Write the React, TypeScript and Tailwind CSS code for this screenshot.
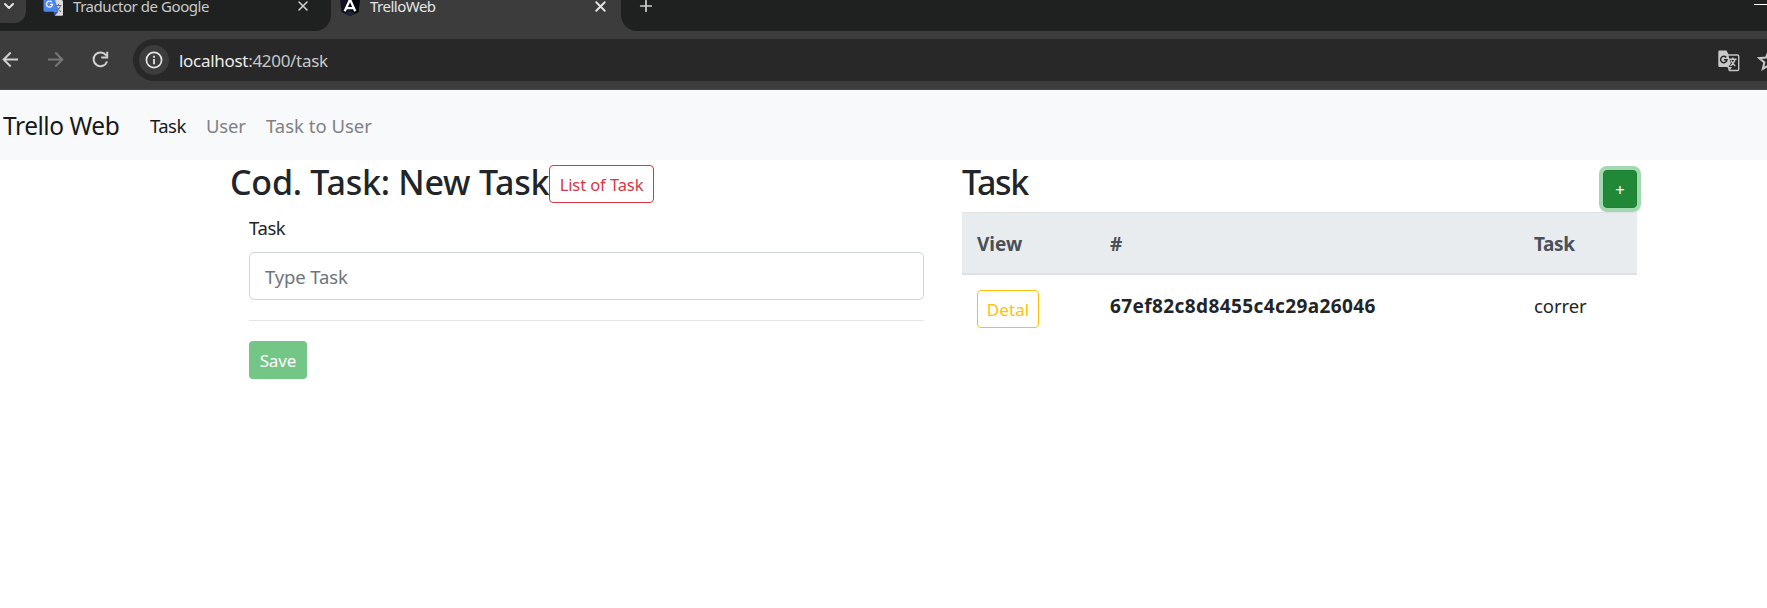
import { X, Plus, ChevronDown } from "lucide-react";

function TranslateLogo() {
  return (
    <svg className="absolute left-[43px] top-[-5px]" width="21" height="21" viewBox="0 0 21 21">
      <path d="M9 5h9.500a1.500 1.500 0 0 1 1.500 1.500V19.500a1.200 1.200 0 0 1-1.200 1.200H12z" fill="#dcdcdc" />
      <path d="M10 16.500h5.500L12 20.700z" fill="#2f56c6" />
      <path d="M2 1h9l4.500 15.700H2A1.500 1.500 0 0 1 .5 15.200V2.500A1.500 1.500 0 0 1 2 1z" fill="#4c87ee" />
      <path d="M8.900 7.300a3 3 0 1 0 .6 2.100H6.900" fill="none" stroke="#e8f0ff" strokeWidth="1.400" />
      <path d="M12.500 10.500h6M15.500 9v1.500M17.500 10.500c-.6 2.600-2.200 4.400-4 5.500M13.800 12l4.200 5" fill="none" stroke="#6a6f73" strokeWidth="1.100" />
    </svg>
  );
}

function ShieldLogo() {
  return (
    <svg className="absolute left-[339px] top-[-5px]" width="22" height="21" viewBox="0 0 22 21">
      <path d="M11 0L21 3.500 19.500 17 11 21 2.500 17 1 3.500z" fill="#10131f" />
      <path d="M11 0L21 3.500 19.500 17 11 21z" fill="#03050d" />
      <path d="M11 15.500l5 3-5 2.500-5-2.500z" fill="#1c2533" />
      <path d="M5.700 16.300L11 4.500l5.300 11.800M7.600 13.200h6.800" fill="none" stroke="#fff" strokeWidth="2.300" />
    </svg>
  );
}

function TabStrip() {
  return (
    <div className="relative flex h-[31px] bg-[#3c3c3c] text-[15px]">
      <div className="h-full w-[331px] rounded-br-[16px] bg-[#1f2120]" />
      <div className="h-full w-[290px]" />
      <div className="h-full flex-1 rounded-bl-[16px] bg-[#1f2120]" />

      <div className="absolute left-0 top-0 h-[23px] w-[26px] rounded-br-[12px] bg-[#3c3c3c]" />
      <ChevronDown className="absolute left-[1px] top-[-2px] text-[#e6e6e6]" size={16} strokeWidth={3} />
      <TranslateLogo />
      <span className="absolute left-[73px] top-0 whitespace-nowrap leading-[13px] tracking-[-0.44px] text-[#c9cac9]">Traductor de Google</span>
      <X className="absolute left-[295px] top-[-2px] text-[#d0d0d0]" size={16} strokeWidth={2.3} />
      <ShieldLogo />
      <span className="absolute left-[370px] top-0 whitespace-nowrap leading-[13px] tracking-[-0.5px] text-[#e6e6e6]">TrelloWeb</span>
      <X className="absolute left-[592px] top-[-2px] text-[#e6e6e6]" size={17} strokeWidth={2.600} />
      <Plus className="absolute left-[637px] top-[-3px] text-[#d0d0d0]" size={18} strokeWidth={2.300} />
      <div className="absolute left-[1754px] top-[4px] h-px w-[13px] bg-white" />
    </div>
  );
}

function Toolbar() {
  return (
    <div className="flex h-[59px] items-start overflow-hidden border-b border-[#4b4647] bg-[#3c3c3c] pt-2">
      <div className="flex h-[42px] w-[133px] shrink-0 items-center">
        <svg width="133" height="42" viewBox="0 0 133 42" fill="none" strokeWidth="2">
          <path d="M18 20.500H4M10.700 13.500l-7 7 7 7" stroke="#d0d0d0" />
          <path d="M48 20.500h14M55.300 13.500l7 7-7 7" stroke="#777" />
          <path d="M106.200 16.500A6.900 6.900 0 1 0 107 22.500M107.200 12.800v5.700h-6" stroke="#d0d0d0" />
        </svg>
      </div>
      <div className="flex h-[42px] w-[1700px] shrink-0 items-center rounded-l-full bg-[#282828] pl-1.5">
        <div className="flex size-[30px] items-center justify-center rounded-full bg-[#3c3c3c]">
          <svg width="18" height="18" viewBox="0 0 18 18" fill="none">
            <circle cx="9" cy="9" r="7.600" stroke="#e3e3e3" strokeWidth="1.700" />
            <path d="M9 8v5.200M9 4.800v1.900" stroke="#e3e3e3" strokeWidth="1.800" />
          </svg>
        </div>
        <div className="ml-[10px] w-[1539px] whitespace-nowrap pt-px text-[17px] leading-[24px] tracking-[-0.3px] text-[#c8c8c8]">
          <span className="text-[#ececec]">localhost</span>:4200/task
        </div>
        <svg className="mt-px" width="22" height="22" viewBox="0 0 22 22" fill="none">
          <path d="M10 5h9.500a1.200 1.200 0 0 1 1.200 1.200V19.300a1.200 1.200 0 0 1-1.200 1.200H11.500L10 16.500" stroke="#c4c4c4" strokeWidth="1.400" />
          <path d="M1.500.5H8.500L10.800 5l3.200 12-2 3-1.500-3H1.500A1.200 1.200 0 0 1 .3 15.800V1.700A1.200 1.200 0 0 1 1.500.5z" fill="#c8c8c8" />
          <path d="M8.300 7.500a3.200 3.200 0 1 0 .7 2.300H5.900" stroke="#282828" strokeWidth="1.500" />
          <path d="M10.500 5.700L13 13l-2.500 4h9V6H12z" fill="#282828" />
          <path d="M11.500 9.200h7M14.800 7.500v1.700M17 9.400c-.6 2.800-2.300 4.900-4.500 6.400M13 10.500c1 2.300 2.400 4.100 4.300 5.500" stroke="#c8c8c8" strokeWidth="1.400" />
        </svg>
        <svg className="ml-[17px] mt-px" width="23" height="23" viewBox="0 0 20 20" fill="none">
          <path d="M10 2.200l2.200 5.300 5.700.5-4.300 3.700 1.300 5.600L10 14.300l-4.900 3 1.300-5.600L2.100 8l5.700-.5z" stroke="#c8c8c8" strokeWidth="1.800" />
        </svg>
      </div>
    </div>
  );
}

function Navbar() {
  return (
    <nav className="flex h-[70px] items-center whitespace-nowrap bg-[#f8f9fb] text-[18.5px] text-[#808182]">
      <a className="ml-[3px] w-[147px] pt-0.5 text-[24.5px] tracking-[-0.45px] text-[#18191a]">Trello Web</a>
      <a className="w-[56px] pt-0.5 tracking-[-0.55px] text-[#18191a]">Task</a>
      <a className="w-[65px] pt-0.5 tracking-[-0.2px]">User</a>
      <a className="-ml-[5px] pt-0.5 tracking-[0px]">Task to User</a>
    </nav>
  );
}

function TaskForm() {
  return (
    <section className="w-[694px]">
      <div className="flex h-[44px] items-start">
        <h1 className="w-[319px] whitespace-nowrap pt-[1px] text-[34px] font-[550] leading-[43px] tracking-[-0.24px]">Cod. Task: New Task</h1>
        <button className="mt-[5px] flex h-[38px] w-[105px] shrink-0 items-center justify-center rounded-[4px] border border-[#dc3545] pt-0.5 text-[16.5px] tracking-[-0.09px] text-[#dc3545]">List of Task</button>
      </div>
      <form className="ml-[19px] w-[675px] pt-2">
        <label className="block h-[40px] pt-[1px] text-[18.5px] leading-[30px] tracking-[-0.4px]">Task</label>
        <div className="flex h-12 items-center rounded-[5px] border border-[#ced4da] px-[15px] pt-0.5 text-[18.5px] tracking-[-0.13px] text-[#6c757d]">Type Task</div>
        <hr className="mt-[20px] border-[#e5e5e5]" />
        <button className="mt-[20px] flex h-[38px] w-[58px] items-center justify-center rounded-[4px] bg-[#74c686] pt-0.5 text-[17px] tracking-[-0.1px] text-white">Save</button>
      </form>
    </section>
  );
}

function TaskList() {
  return (
    <section className="ml-[38px] w-[675px]">
      <div className="flex h-[52px] justify-between">
        <h1 className="pt-[1px] text-[34px] font-[550] leading-[43px] tracking-[-1.4px]">Task</h1>
        <button className="mt-[10px] flex h-[38px] w-[34px] items-center justify-center rounded-[4px] border border-[#1e7e34] bg-[#218838] pt-0.5 text-[16.5px] text-white ring-4 ring-[#a3d9b1]">+</button>
      </div>
      <div className="grid h-[63px] grid-cols-[133px_424px_1fr] items-center border-b-2 border-t border-[#dee2e6] bg-[#e9ecef] pl-[15px] pt-0.5 text-[19px] font-bold text-[#495057]">
        <div className="tracking-[0px]">View</div>
        <div>#</div>
        <div className="tracking-[-0.4px]">Task</div>
      </div>
      <div className="grid grid-cols-[133px_424px_1fr] items-start pl-[15px] pt-[15px] text-[18.5px] leading-[32px]">
        <button className="flex h-[38px] w-[62px] items-center justify-center rounded-[4px] border border-[#ffc107] pt-0.5 text-[17px] tracking-[0.05px] text-[#ffc107]">Detal</button>
        <div className="text-[19px] font-bold tracking-[0.4px]">67ef82c8d8455c4c29a26046</div>
        <div className="tracking-[-0.08px]">correr</div>
      </div>
    </section>
  );
}

export default function App() {
  return (
    <div className="h-[608px] w-[1767px] overflow-hidden bg-white font-['Noto_Sans','Open_Sans',sans-serif] text-[#212529]">
      <TabStrip />
      <Toolbar />
      <Navbar />
      <main className="flex pl-[230px]">
        <TaskForm />
        <TaskList />
      </main>
    </div>
  );
}
